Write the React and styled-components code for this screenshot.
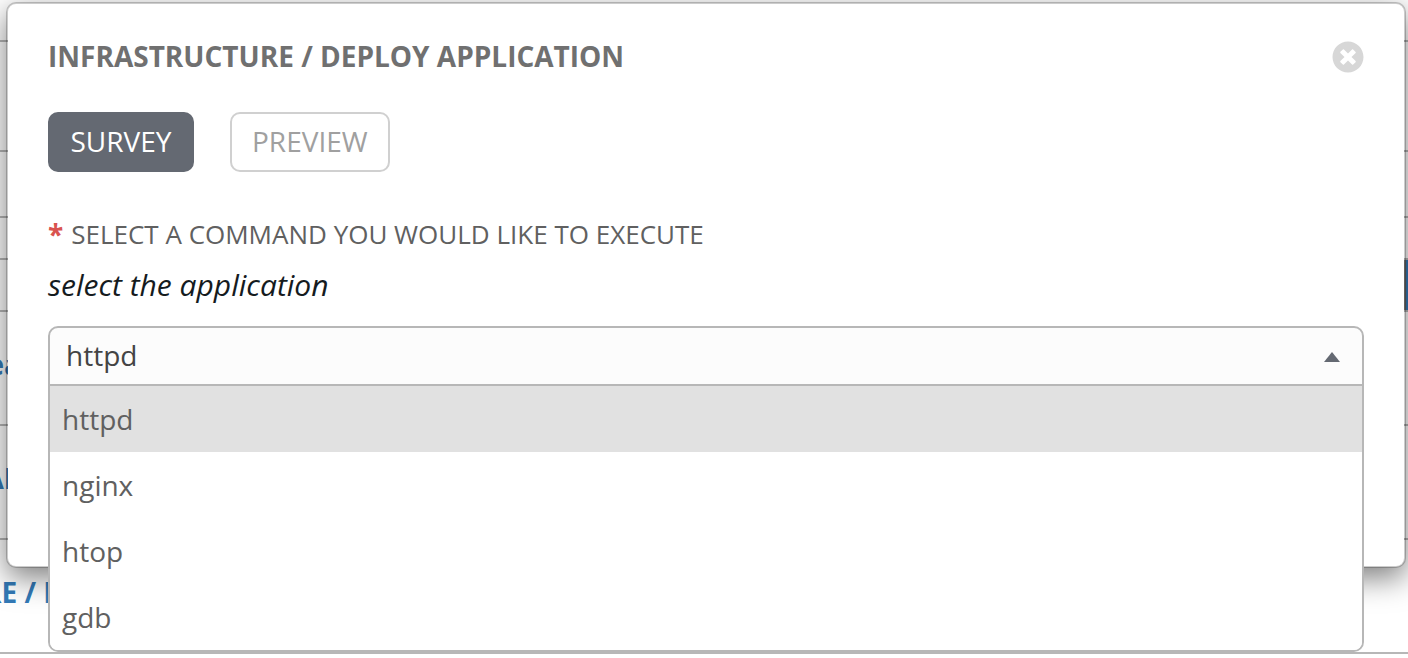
import React from "react";
import styled, { createGlobalStyle, css } from "styled-components";
import { FaTimesCircle } from "react-icons/fa";

const GlobalStyle = createGlobalStyle`
  *, *::before, *::after { box-sizing: border-box; }
  body {
    margin: 0;
    background: #fff;
    color: #151b1e;
    font-family: "Open Sans", "Noto Sans", sans-serif;
    font-size: 28px;
  }
`;

const Screen = styled.div`
  position: relative;
  min-height: 100vh;
  overflow: hidden;
`;

const Row = styled.div`
  display: flex;
  align-items: center;
  justify-content: space-between;
  height: ${(p) => p.$height}px;
  border-bottom: 2px solid #b7b7b7;
`;

const RowLink = styled.a`
  display: flex;
  justify-content: flex-end;
  width: ${(p) => p.$width}px;
  padding-bottom: 8px;
  overflow: hidden;
  color: #337ab7;
  font-weight: 700;
  line-height: 40px;
  text-decoration: none;
  white-space: nowrap;
`;

const RowAction = styled.button`
  align-self: stretch;
  width: 4px;
  margin-left: auto;
  padding: 0;
  border: 0;
  border-left: 2px solid #777;
  background: #337ab7;
`;

const Modal = styled.section`
  position: absolute;
  inset: 2px 2px auto 6px;
  padding: 32px 40px 180px;
  border: 2px solid rgba(0, 0, 0, 0.2);
  border-radius: 10px;
  background: #fff;
  background-clip: padding-box;
  box-shadow: 0 10px 30px rgba(0, 0, 0, 0.5);
`;

const Header = styled.header`
  display: flex;
  align-items: center;
  justify-content: space-between;
  margin-bottom: 34px;
`;

const Title = styled.h1`
  margin: 0;
  padding-bottom: 2px;
  color: #707070;
  font-size: 28px;
  font-weight: 700;
  line-height: 40px;
`;

const CloseButton = styled.button`
  display: flex;
  padding: 0;
  border: 0;
  background: none;
  color: #d7d7d7;
  font-size: 32px;
`;

const Tabs = styled.nav`
  display: flex;
  gap: 36px;
  margin-bottom: 36px;
`;

const Tab = styled.button`
  height: 60px;
  min-width: 146px;
  padding: 0 20px 2px;
  border: 2px solid #d0d0d0;
  border-radius: 10px;
  background: #fff;
  color: #a0a0a0;
  font: inherit;
  line-height: 40px;
  ${(p) =>
    p.$active &&
    css`
      border-color: #646972;
      background: #646972;
      color: #fff;
    `}
`;

const Label = styled.label`
  display: flex;
  gap: 8px;
  color: #606060;
  font-size: 26px;
  line-height: 52px;
`;

const Required = styled.span`
  color: #d9534f;
  font-size: 28px;
  font-weight: 700;
`;

const Hint = styled.p`
  margin: 0 0 16px;
  font-size: 30px;
  font-style: italic;
  line-height: 50px;
`;

const Dropdown = styled.div`
  position: relative;
`;

const Select = styled.select`
  display: block;
  width: 100%;
  height: 60px;
  padding: 0 16px 2px;
  appearance: none;
  border: 2px solid #b7b7b7;
  border-radius: 10px 10px 0 0;
  background: #fcfcfc;
  color: #444;
  font: inherit;
  outline: none;
`;

const Caret = styled.span`
  position: absolute;
  top: 26px;
  right: 24px;
  border: solid transparent;
  border-width: 0 8px 10px;
  border-bottom-color: #646972;
  pointer-events: none;
`;

const Options = styled.ul`
  position: absolute;
  top: 100%;
  left: 0;
  right: 0;
  margin: 0;
  padding: 0;
  border: 2px solid #b7b7b7;
  border-top: 0;
  border-radius: 0 0 10px 10px;
  background: #fff;
  list-style: none;
  overflow: hidden;
`;

const Option = styled.li`
  padding: 0 12px;
  background: ${(p) => (p.$selected ? "#e1e1e1" : "#fff")};
  color: #606060;
  line-height: 66px;
`;

const rows = [
  { height: 42 },
  { height: 110 },
  { height: 66 },
  { height: 42 },
  { height: 52, action: true },
  { height: 114, text: "ea", width: 21 },
  { height: 114, text: "AI", width: 13 },
  { height: 114, text: "RE / D", width: 64 },
];

const commands = ["httpd", "nginx", "htop", "gdb"];

export default function App() {
  const [command, setCommand] = React.useState("httpd");

  return (
    <Screen>
      <GlobalStyle />
      <main>
        {rows.map((row, i) => (
          <Row key={i} $height={row.height}>
            {row.text && (
              <RowLink href="#" $width={row.width}>
                {row.text}
              </RowLink>
            )}
            {row.action && <RowAction aria-label="Run" />}
          </Row>
        ))}
      </main>
      <Modal role="dialog" aria-labelledby="dialog-title">
        <Header>
          <Title id="dialog-title">INFRASTRUCTURE / DEPLOY APPLICATION</Title>
          <CloseButton type="button" aria-label="Close">
            <FaTimesCircle />
          </CloseButton>
        </Header>
        <Tabs>
          <Tab type="button" $active>SURVEY</Tab>
          <Tab type="button">PREVIEW</Tab>
        </Tabs>
        <Label htmlFor="command">
          <Required>*</Required>
          SELECT A COMMAND YOU WOULD LIKE TO EXECUTE
        </Label>
        <Hint>select the application</Hint>
        <Dropdown>
          <Select id="command" value={command} onChange={(e) => setCommand(e.target.value)}>
            {commands.map((name) => (
              <option key={name}>{name}</option>
            ))}
          </Select>
          <Caret />
          <Options role="listbox" aria-label="Commands">
            {commands.map((name) => (
              <Option
                key={name}
                role="option"
                aria-selected={name === command}
                $selected={name === command}
                onClick={() => setCommand(name)}
              >
                {name}
              </Option>
            ))}
          </Options>
        </Dropdown>
      </Modal>
    </Screen>
  );
}
